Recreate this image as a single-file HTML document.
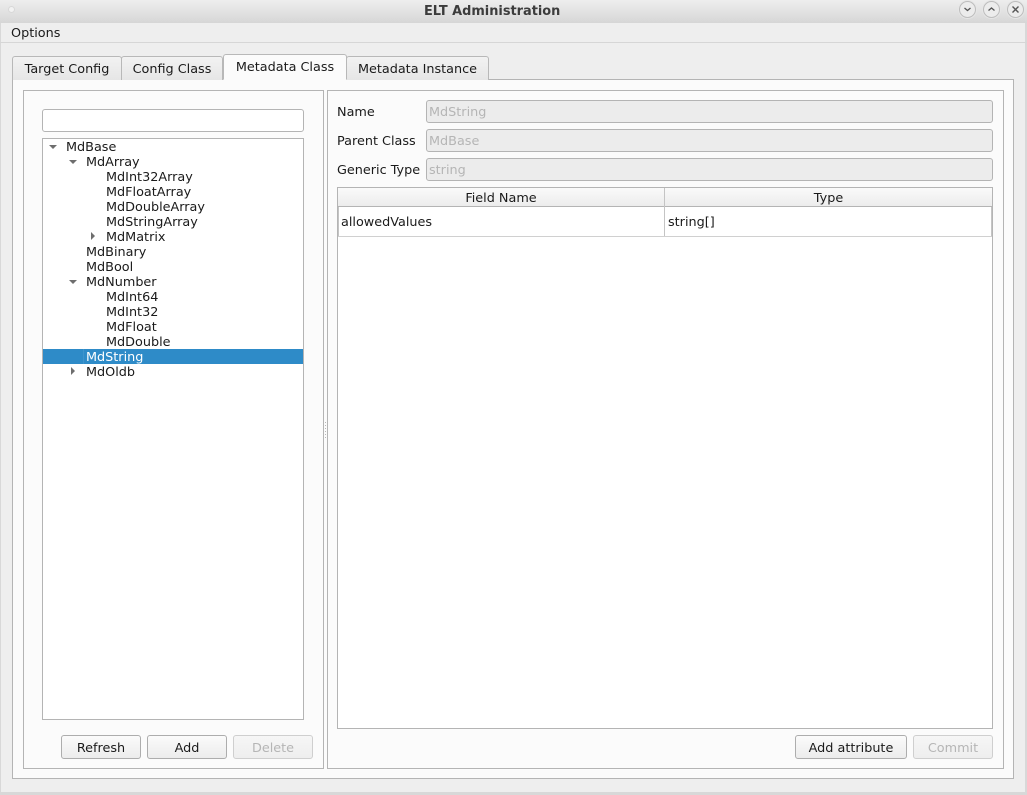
<!DOCTYPE html>
<html><head><meta charset="utf-8">
<style>
html,body{margin:0;padding:0;background:#eeeeee;}
body{width:1027px;height:795px;position:relative;overflow:hidden;font-family:"DejaVu Sans",sans-serif;font-size:12.8px;color:#1a1a1a;}
.a{position:absolute;box-sizing:border-box;}
.t{position:absolute;white-space:pre;line-height:15px;height:15px;margin-top:1px;}
.tab{position:absolute;box-sizing:border-box;border:1px solid #b8b8b8;border-bottom:none;border-radius:3px 3px 0 0;background:linear-gradient(#f2f2f2,#e6e6e6);text-align:center;line-height:26px;}
.btn{position:absolute;box-sizing:border-box;height:24px;top:735px;border:1px solid #adadad;border-radius:3px;background:linear-gradient(#fbfbfb,#ececec);text-align:center;line-height:25px;}
.btn.d{border-color:#cfcfcf;color:#b5b5b5;background:linear-gradient(#f6f6f6,#eeeeee);}
.inp{position:absolute;box-sizing:border-box;left:426px;width:567px;height:23px;border:1px solid #b4b4b4;border-radius:3px;background:#ececec;color:#b5b5b5;padding-left:2px;line-height:23px;}
.wb{position:absolute;top:1px;width:17px;height:17px;border-radius:50%;border:1px solid #bdbdbd;background:#ececec;box-sizing:border-box;box-shadow:0 0 0 1px #e6e6e6;}
.wb svg{position:absolute;left:0;top:0;}
</style></head><body>
<div class="a" style="left:0;top:0;width:1027px;height:23px;background:linear-gradient(#eeeeee,#d6d6d6);"></div>
<div class="a" style="left:8px;top:6px;width:7px;height:7px;border-radius:50%;background:#f2f2f2;border:1px solid #d8d8d8;"></div>
<div class="t" style="left:424px;top:3px;font-weight:bold;font-size:12.9px;color:#3c3c3c;">ELT Administration</div>
<div class="wb" style="left:959px;"><svg width="15" height="15"><path d="M4.5 6l3 2.5 3-2.5" fill="none" stroke="#555" stroke-width="1.3"/></svg></div>
<div class="wb" style="left:983px;"><svg width="15" height="15"><path d="M4.5 8.5l3-2.5 3 2.5" fill="none" stroke="#555" stroke-width="1.3"/></svg></div>
<div class="wb" style="left:1007px;"><svg width="15" height="15"><path d="M4.5 4.5l6 6M10.5 4.5l-6 6" fill="none" stroke="#555" stroke-width="1.4"/></svg></div>

<div class="a" style="left:0;top:23px;width:1px;height:769px;background:#d8d8d8;"></div>
<div class="a" style="left:1025px;top:23px;width:2px;height:769px;background:#d8d8d8;"></div>
<div class="a" style="left:0;top:42px;width:1027px;height:1px;background:#d6d6d6;"></div>
<div class="t" style="left:11px;top:25px;">Options</div>

<div class="a" style="left:12px;top:79px;width:1002px;height:700px;border:1px solid #b4b4b4;background:#fbfbfb;"></div>
<div class="tab" style="left:12px;top:56px;width:110px;height:24px;">Target Config</div>
<div class="tab" style="left:121px;top:56px;width:102px;height:24px;">Config Class</div>
<div class="tab" style="left:346px;top:56px;width:143px;height:24px;">Metadata Instance</div>
<div class="tab" style="left:223px;top:54px;width:124px;height:26px;background:#fbfbfb;border-bottom:1px solid #fbfbfb;line-height:25px;">Metadata Class</div>

<div class="a" style="left:23px;top:90px;width:301px;height:679px;border:1px solid #b4b4b4;"></div>
<div class="a" style="left:327px;top:90px;width:677px;height:679px;border:1px solid #b4b4b4;"></div>

<div class="a" style="left:42px;top:109px;width:262px;height:23px;border:1px solid #b4b4b4;border-radius:3px;background:#fff;"></div>
<div class="a" style="left:42px;top:138px;width:262px;height:582px;border:1px solid #b4b4b4;background:#fff;"></div>
<div class="a" style="left:43px;top:349px;width:260px;height:15px;background:#2e8bc8;"></div>
<div class="a" style="left:83px;top:349px;width:1px;height:15px;background:#3f94cc;"></div>

<svg class="a" style="left:0;top:0;" width="330" height="400">
<path d="M49 145h8l-4 4z" fill="#6e6e6e"/>
<path d="M69 160h8l-4 4z" fill="#6e6e6e"/>
<path d="M69 280h8l-4 4z" fill="#6e6e6e"/>
<path d="M91 232v8l4-4z" fill="#6e6e6e"/>
<path d="M71 367v8l4-4z" fill="#6e6e6e"/>
</svg>

<div class="t" style="left:66px;top:139px;">MdBase</div>
<div class="t" style="left:86px;top:154px;">MdArray</div>
<div class="t" style="left:106px;top:169px;">MdInt32Array</div>
<div class="t" style="left:106px;top:184px;">MdFloatArray</div>
<div class="t" style="left:106px;top:199px;">MdDoubleArray</div>
<div class="t" style="left:106px;top:214px;">MdStringArray</div>
<div class="t" style="left:106px;top:229px;">MdMatrix</div>
<div class="t" style="left:86px;top:244px;">MdBinary</div>
<div class="t" style="left:86px;top:259px;">MdBool</div>
<div class="t" style="left:86px;top:274px;">MdNumber</div>
<div class="t" style="left:106px;top:289px;">MdInt64</div>
<div class="t" style="left:106px;top:304px;">MdInt32</div>
<div class="t" style="left:106px;top:319px;">MdFloat</div>
<div class="t" style="left:106px;top:334px;">MdDouble</div>
<div class="t" style="left:86px;top:349px;color:#fff;">MdString</div>
<div class="t" style="left:86px;top:364px;">MdOldb</div>

<div class="btn" style="left:61px;width:80px;">Refresh</div>
<div class="btn" style="left:147px;width:80px;">Add</div>
<div class="btn d" style="left:233px;width:80px;">Delete</div>

<svg class="a" style="left:324px;top:420px;" width="3" height="20"><g fill="#b8b8b8"><rect x="1" y="2" width="1" height="1"/><rect x="1" y="5" width="1" height="1"/><rect x="1" y="8" width="1" height="1"/><rect x="1" y="11" width="1" height="1"/><rect x="1" y="14" width="1" height="1"/><rect x="1" y="17" width="1" height="1"/></g></svg>

<div class="t" style="left:337px;top:104px;">Name</div>
<div class="t" style="left:337px;top:133px;">Parent Class</div>
<div class="t" style="left:337px;top:162px;">Generic Type</div>
<div class="inp" style="top:100px;">MdString</div>
<div class="inp" style="top:129px;">MdBase</div>
<div class="inp" style="top:158px;">string</div>

<div class="a" style="left:337px;top:187px;width:656px;height:542px;border:1px solid #b4b4b4;background:#fff;"></div>
<div class="a" style="left:338px;top:188px;width:654px;height:19px;background:linear-gradient(#fafafa,#ececec);border-bottom:1px solid #b4b4b4;"></div>
<div class="a" style="left:664px;top:188px;width:1px;height:48px;background:#c4c4c4;"></div>
<div class="a" style="left:338px;top:207px;width:1px;height:30px;background:#c4c4c4;"></div>
<div class="a" style="left:991px;top:207px;width:1px;height:30px;background:#c4c4c4;"></div>
<div class="a" style="left:338px;top:236px;width:654px;height:1px;background:#d0d0d0;"></div>
<div class="t" style="left:338px;width:326px;text-align:center;top:190px;">Field Name</div>
<div class="t" style="left:665px;width:327px;text-align:center;top:190px;">Type</div>
<div class="t" style="left:341px;top:214px;">allowedValues</div>
<div class="t" style="left:668px;top:214px;">string[]</div>

<div class="btn" style="left:795px;width:112px;">Add attribute</div>
<div class="btn d" style="left:913px;width:80px;">Commit</div>

<div class="a" style="left:0;top:792px;width:1027px;height:3px;background:#d8d8d8;"></div>
</body></html>
